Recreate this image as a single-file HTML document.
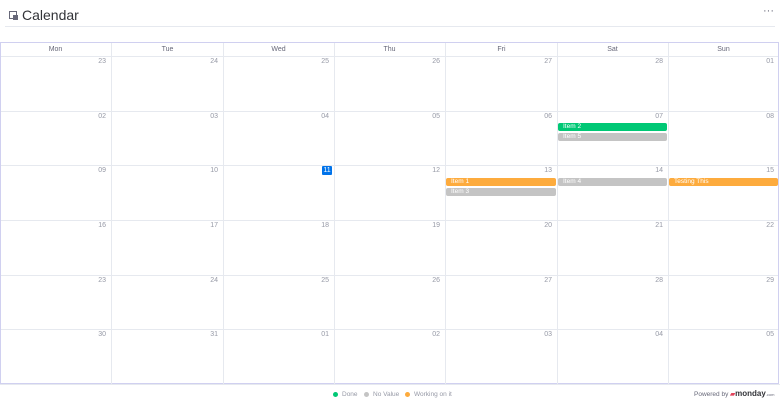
<!DOCTYPE html><html><head><style>
body{margin:0;width:780px;height:406px;background:#fff;font-family:"Liberation Sans",sans-serif;position:relative;overflow:hidden}
.a{position:absolute}
.t{font-size:14px;color:#323338;left:22px;top:7px}
.hl{left:5px;right:5px;top:26px;height:1px;background:#e6e9ef}
.dots{right:6px;top:5px;color:#676879;font-size:11px}
.grid{left:0;top:42px;width:779px;height:342px;border:1px solid #d0d0f0;box-sizing:border-box}
.vl{width:1px;background:#e6e9ef;top:43px;height:341px}
.hr{height:1px;background:#e6e9ef;left:1px;width:777px}
.dh{font-size:7px;color:#676879;top:46px;width:111px;text-align:center}
.dn{font-size:7px;color:#9699a6;text-align:right;width:104px}
.ev{height:8px;border-radius:2px;font-size:6.5px;color:#fff;line-height:8px;padding-left:5px;box-sizing:border-box}
.o{background:#fdab3d}.g{background:#c4c4c4}.gr{background:#00c875}
.leg{font-size:6.5px;color:#9699a6;top:391px}
.dot{display:inline-block;width:5px;height:5px;border-radius:50%;margin-right:4px;vertical-align:middle}
</style></head><body>
<div class="a" style="left:9px;top:11px;width:8px;height:8px;border:1px solid #676879;box-sizing:border-box"></div>
<div class="a" style="left:13px;top:15px;width:5px;height:5px;background:#676879"></div>
<div class="a t">Calendar</div>
<div class="a dots">···</div>
<div class="a hl"></div>
<div class="a grid"></div>
<div class="a hr" style="top:56px"></div>
<div class="a hr" style="top:111px"></div>
<div class="a hr" style="top:165px"></div>
<div class="a hr" style="top:220px"></div>
<div class="a hr" style="top:275px"></div>
<div class="a hr" style="top:329px"></div>
<div class="a vl" style="left:111px"></div>
<div class="a vl" style="left:223px"></div>
<div class="a vl" style="left:334px"></div>
<div class="a vl" style="left:445px"></div>
<div class="a vl" style="left:557px"></div>
<div class="a vl" style="left:668px"></div>
<div class="a dh" style="left:0">Mon</div><div class="a dh" style="left:112px">Tue</div><div class="a dh" style="left:223px">Wed</div><div class="a dh" style="left:334px">Thu</div><div class="a dh" style="left:446px">Fri</div><div class="a dh" style="left:557px">Sat</div><div class="a dh" style="left:668px">Sun</div>
<div id="nums"></div>
<script>
var rows=[["23","24","25","26","27","28","01"],["02","03","04","05","06","07","08"],["09","10","11","12","13","14","15"],["16","17","18","19","20","21","22"],["23","24","25","26","27","28","29"],["30","31","01","02","03","04","05"]];
var tops=[58,113,167,222,277,331],lefts=[0,112,223,334,446,557,668],h="";
rows.forEach((r,i)=>r.forEach((d,j)=>{
 if(i==2&&j==2)h+='<div class="a" style="left:322px;top:166px;width:10px;height:9px;background:#0073ea;color:#fff;font-size:7px;text-align:center;line-height:9px;border-radius:1px">11</div>';
 else h+='<div class="a dn" style="left:'+(lefts[j]+2)+'px;top:'+tops[i]+'px">'+d+'</div>';}));
document.getElementById("nums").innerHTML=h;
</script>
<div class="a ev gr" style="left:558px;top:123px;width:109px">Item 2</div>
<div class="a ev g" style="left:558px;top:133px;width:109px">Item 5</div>
<div class="a ev o" style="left:446px;top:178px;width:110px">Item 1</div>
<div class="a ev g" style="left:446px;top:188px;width:110px">Item 3</div>
<div class="a ev g" style="left:558px;top:178px;width:109px">Item 4</div>
<div class="a ev o" style="left:669px;top:178px;width:109px">Testing This</div>
<div class="a" style="left:0;top:384px;width:780px;height:1px;background:#e6e9ef"></div>
<div class="a leg" style="left:333px"><span class="dot" style="background:#00c875"></span>Done</div>
<div class="a leg" style="left:364px"><span class="dot" style="background:#c4c4c4"></span>No Value</div>
<div class="a leg" style="left:405px"><span class="dot" style="background:#fdab3d"></span>Working on it</div>
<div class="a" style="left:694px;top:389px;font-size:6.5px;color:#676879">Powered by <b style="color:#e2445c">▰</b><b style="color:#323338;font-size:8px">monday</b><span style="font-size:4px">.com</span></div>
</body></html>
